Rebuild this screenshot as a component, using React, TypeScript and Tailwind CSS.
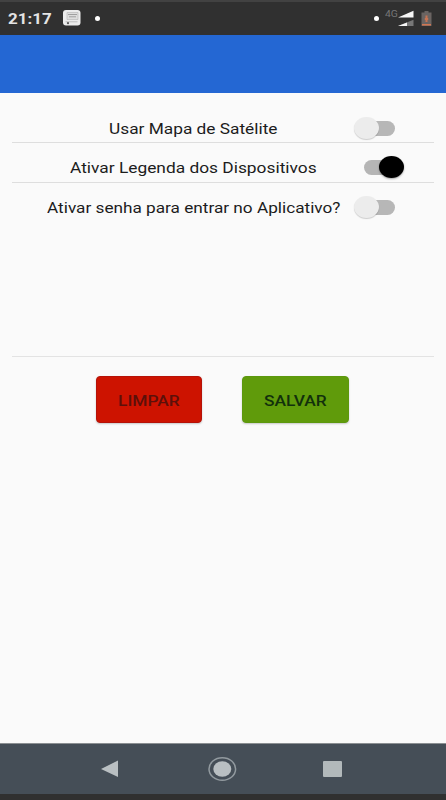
type SwitchProps = { on?: boolean };

function Switch({ on = false }: SwitchProps) {
  return on ? (
    <div role="switch" aria-checked="true" className="ml-[364px] flex h-[22px] w-10 items-center">
      <div className="h-[15px] w-6 shrink-0 rounded-l-full bg-[#b5b5b5]" />
      <div className="-ml-[9px] h-[22px] w-[25px] shrink-0 rounded-[50%] bg-black shadow-[0_1px_2px_rgba(0,0,0,0.35)]" />
    </div>
  ) : (
    <div role="switch" aria-checked="false" className="ml-[354px] flex h-[22px] w-10 items-center">
      <div className="z-10 h-[22px] w-[25px] shrink-0 rounded-[50%] bg-[#ececec] shadow-[0_1px_1px_rgba(0,0,0,0.18)]" />
      <div className="-ml-[9px] h-[15px] w-[25px] shrink-0 rounded-r-full bg-[#b7b7b7]" />
    </div>
  );
}

function StatusBar() {
  return (
    <div className="flex h-[35px] items-start border-t-2 border-[#424242] bg-[#303030] text-white">
      <span className="ml-2 mt-[7px] w-[54px] origin-left scale-x-[1.13] text-[15px] leading-5 font-bold text-[#e4e4e4]">21:17</span>
      <svg className="mt-[8px] ml-[1px]" width="18" height="16" viewBox="0 0 18 16">
        <rect x="0" y="0" width="17.5" height="15.5" rx="3" fill="#ececec" />
        <path d="M4 2.5h11v7H4z" fill="#dddddd" stroke="#b5b5b5" strokeWidth=".6" />
        <path d="M5 4.5h9M6 6.8h7" stroke="#999" strokeWidth=".9" />
        <path d="M2.5 11.8h12" stroke="#aaa" strokeWidth=".7" />
        <circle cx="5" cy="13.2" r="1.1" fill="#555" />
      </svg>
      <div className="mt-[14px] ml-[14px] size-[5px] rounded-full bg-white" />
      <div className="mt-[14px] ml-[274px] size-[5px] rounded-full bg-white" />
      <span className="mt-[7px] ml-[6px] w-[13px] origin-left scale-x-[1.15] text-[9px] leading-[11px] text-[#777777]">4G</span>
      <svg className="mt-[8px]" width="17" height="18" viewBox="0 0 17 18">
        <path d="M0 7.5L15.5.8v6.7z" fill="#f5f5f5" />
        <path d="M0 16l15.5-6.2V16z" fill="#777" />
        <path d="M0 16l9-3.6V16z" fill="#f5f5f5" />
      </svg>
      <svg className="mt-[9px] ml-[6px]" width="11" height="16" viewBox="0 0 11 16">
        <path d="M3.5 0h4v1.5h3V15H.5V1.5h3z" fill="#6a6462" />
        <path d="M5.5 4.5v6.5M3.8 8h3.4" stroke="#c77352" strokeWidth="2" />
        <path d="M1 13h9v1.5H1z" fill="#d17652" />
      </svg>
    </div>
  );
}

function NavBar() {
  return (
    <div className="h-[57px] border-t border-[#8b8f92] bg-[#303030]">
      <div className="h-[50px] bg-[#454e57]">
        <svg width="446" height="50" viewBox="0 0 446 50">
          <path d="M101 25L118 16.5v16.5z" fill="#b9bfc2" />
          <ellipse cx="222.3" cy="25" rx="13.3" ry="11.3" fill="none" stroke="#929a9f" strokeWidth="1.5" />
          <ellipse cx="222.3" cy="25" rx="9" ry="7.7" fill="#b9bfc2" />
          <rect x="323" y="17" width="19" height="16" rx="1" fill="#b2b9bb" />
        </svg>
      </div>
    </div>
  );
}

export default function App() {
  return (
    <div className="flex h-[800px] w-[446px] flex-col overflow-hidden bg-[#fafafa] font-['Roboto',sans-serif]">
      <StatusBar />
      <header className="h-[58px] bg-[#2467d3]" />
      <main className="flex-1 text-[#1c1c1c]">
        <div className="mx-3 h-[50px] border-b border-[#dedede] pt-[24px]">
          <div className="-mx-3 grid">
            <span className="col-start-1 row-start-1 ml-[109px] w-max origin-left scale-x-[1.235] text-sm leading-6">Usar Mapa de Satélite</span>
            <div className="col-start-1 row-start-1"><Switch /></div>
          </div>
        </div>
        <div className="mx-3 h-10 border-b border-[#dedede] pt-[13px]">
          <div className="-mx-3 grid">
            <span className="col-start-1 row-start-1 ml-[70px] w-max origin-left scale-x-[1.238] text-sm leading-6">Ativar Legenda dos Dispositivos</span>
            <div className="col-start-1 row-start-1"><Switch on /></div>
          </div>
        </div>
        <div className="mx-3 h-[174px] border-b border-[#e3e3e3] pt-[13px]">
          <div className="-mx-3 grid">
            <span className="col-start-1 row-start-1 ml-[47px] w-max origin-left scale-x-[1.228] text-sm leading-6">Ativar senha para entrar no Aplicativo?</span>
            <div className="col-start-1 row-start-1"><Switch /></div>
          </div>
        </div>
        <div className="ml-24 flex gap-10 pt-[19px]">
          <button className="h-[47px] w-[106px] rounded-[4px] border border-[#b51208] bg-[#cd1300] pt-0.5 text-sm font-medium text-[#5c100a] shadow-[0_1px_2px_rgba(0,0,0,0.2)]">
            <span className="inline-block scale-x-[1.24]">LIMPAR</span>
          </button>
          <button className="h-[47px] w-[107px] rounded-[4px] border border-[#5c980e] bg-[#609b0b] pt-0.5 text-sm font-medium text-[#12300c] shadow-[0_1px_2px_rgba(0,0,0,0.2)]">
            <span className="inline-block scale-x-[1.24]">SALVAR</span>
          </button>
        </div>
      </main>
      <NavBar />
    </div>
  );
}
